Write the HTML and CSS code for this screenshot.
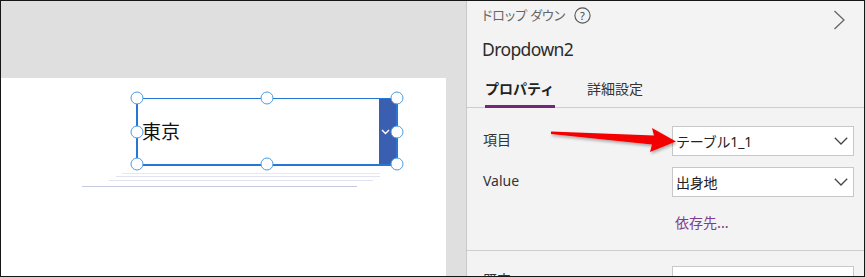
FILE: index.html
```html
<!DOCTYPE html>
<html lang="ja">
<head>
    <meta charset="UTF-8">
    <title>Dropdown2 - プロパティ</title>
    <link rel="stylesheet" href="styles.css">
</head>
<body>
    <div class="frame">
        <div class="stage">
            <div class="stage-top"></div>
            <div class="stage-body">
                <div class="canvas">
                    <div class="widget">
                        <span class="widget-text">東京</span>
                        <span class="widget-btn">
                            <svg width="9" height="6" viewBox="0 0 9 6"><path d="M1 1 L4.5 4.5 L8 1" fill="none" stroke="#fff" stroke-width="1.4"/></svg>
                        </span>
                        <span class="handle h-tl"></span>
                        <span class="handle h-tc"></span>
                        <span class="handle h-tr"></span>
                        <span class="handle h-ml"></span>
                        <span class="handle h-mr"></span>
                        <span class="handle h-bl"></span>
                        <span class="handle h-bc"></span>
                        <span class="handle h-br"></span>
                    </div>
                    <svg class="ghost-lines" width="300" height="20" viewBox="80 170 300 20">
                        <line x1="122" y1="173.5" x2="382" y2="173.5" stroke="#e5e7f1" stroke-width="1"/>
                        <line x1="116" y1="176.5" x2="382" y2="176.5" stroke="#e1e4ef" stroke-width="1"/>
                        <line x1="109" y1="180.5" x2="373" y2="180.5" stroke="#e1e4ef" stroke-width="1"/>
                        <line x1="82" y1="186.5" x2="357" y2="186.5" stroke="#c6cae0" stroke-width="1"/>
                    </svg>
                </div>
                <div class="canvas-gutter"></div>
            </div>
        </div>

        <aside class="panel">
            <div class="panel-top">
                <div class="kind">
                    <span>ドロップ ダウン</span>
                    <svg class="help" width="17" height="17" viewBox="0 0 17 17">
                        <circle cx="8.5" cy="8.5" r="7.6" fill="none" stroke="#555" stroke-width="1.1"/>
                        <text x="8.5" y="12.6" text-anchor="middle" font-size="11" font-family="Noto Sans, sans-serif" fill="#444">?</text>
                    </svg>
                </div>
                <svg class="collapse" width="13" height="20" viewBox="0 0 13 20"><path d="M1.5 1 L11 10 L1.5 19" fill="none" stroke="#666" stroke-width="1.3"/></svg>
            </div>
            <div class="ctrl-name">Dropdown2</div>
            <div class="tabs">
                <span class="tab active">プロパティ</span>
                <span class="tab">詳細設定</span>
            </div>

            <div class="props">
                <div class="prop-row">
                    <span class="prop-label">項目</span>
                    <div class="select">
                        <span>テーブル1_1</span>
                        <svg width="14" height="8" viewBox="0 0 14 8"><path d="M0.8 0.8 L7 7 L13.2 0.8" fill="none" stroke="#444" stroke-width="1.3"/></svg>
                    </div>
                </div>
                <div class="prop-row">
                    <span class="prop-label">Value</span>
                    <div class="select">
                        <span>出身地</span>
                        <svg width="14" height="8" viewBox="0 0 14 8"><path d="M0.8 0.8 L7 7 L13.2 0.8" fill="none" stroke="#444" stroke-width="1.3"/></svg>
                    </div>
                </div>
                <a href="#" class="dep-link">依存先...</a>
            </div>

            <div class="props props-next">
                <div class="prop-row">
                    <span class="prop-label">既定</span>
                    <div class="select">
                        <span>1</span>
                    </div>
                </div>
            </div>
        </aside>

        <svg class="pointer" width="145" height="40" viewBox="540 120 145 40">
            <defs>
                <filter id="arrow-shadow" x="-10%" y="-30%" width="120%" height="160%">
                    <feDropShadow dx="1" dy="2" stdDeviation="1.4" flood-color="#000" flood-opacity="0.3"/>
                </filter>
            </defs>
            <polygon points="551,131.5 654,135.5 652,128 676,141.5 650,152 652,144.5 551,134" fill="#f50000" filter="url(#arrow-shadow)"/>
        </svg>
    </div>
</body>
</html>
```

FILE: styles.css
```css
* {
    margin: 0;
    padding: 0;
    box-sizing: border-box;
}

body {
    font-family: "Noto Sans", "Noto Sans CJK JP", sans-serif;
    background: #fff;
}

.frame {
    position: relative;
    display: flex;
    width: 865px;
    height: 277px;
    border: 1px solid #161616;
    overflow: hidden;
}

/* left: the design canvas */
.stage {
    width: 465px;
    display: flex;
    flex-direction: column;
}

.stage-top {
    height: 77px;
    background: #dfdfdf;
}

.stage-body {
    flex: 1;
    display: flex;
}

.canvas {
    position: relative;
    width: 445px;
    background: #fff;
}

.canvas-gutter {
    flex: 1;
    background: #dfdfdf;
}

.widget {
    position: absolute;
    left: 135px;
    top: 20px;
    width: 262px;
    height: 68px;
    border: 2px solid #2577d3;
    border-top-width: 1.5px;
    display: flex;
    align-items: center;
}

.widget-text {
    flex: 1;
    padding-left: 4px;
    padding-bottom: 3px;
    font-family: "Noto Sans CJK JP", sans-serif;
    font-size: 19px;
    color: #111;
}

.widget-btn {
    align-self: stretch;
    width: 17px;
    background: #3a5fb1;
    display: flex;
    align-items: center;
    justify-content: center;
    padding-right: 4px;
}

.handle {
    position: absolute;
    width: 13px;
    height: 13px;
    border: 1.5px solid #4b9be3;
    border-radius: 50%;
    background: #fff;
    transform: translate(-50%, -50%);
}

.h-tl { left: -1px; top: -1px; }
.h-tc { left: 129px; top: -1px; }
.h-tr { left: 259px; top: -1px; }
.h-ml { left: -1px; top: 33px; }
.h-mr { left: 259px; top: 33px; }
.h-bl { left: -1px; top: 65px; }
.h-bc { left: 129px; top: 65px; }
.h-br { left: 259px; top: 65px; }

.ghost-lines {
    position: absolute;
    left: 79px;
    top: 92px;
}

/* right: properties pane */
.panel {
    flex: 1;
    background: #f3f3f3;
    border-left: 1px solid #c9c9c9;
    color: #333;
}

.panel-top {
    display: flex;
    justify-content: space-between;
    align-items: flex-start;
    height: 30px;
    padding-left: 15px;
}

.kind {
    display: flex;
    align-items: center;
    gap: 9px;
    margin-top: 5px;
    font-family: "Noto Sans CJK JP", sans-serif;
    font-size: 13px;
    line-height: 18px;
    color: #666;
    font-feature-settings: "palt";
}

.help {
    margin-top: 1px;
}

.collapse {
    margin-top: 9px;
    margin-right: 18px;
}

.ctrl-name {
    margin-top: 6px;
    padding-left: 15px;
    font-size: 17.5px;
    line-height: 24px;
    letter-spacing: -0.6px;
    color: #2b2b2b;
}

.tabs {
    display: flex;
    gap: 32px;
    margin-top: 17px;
    padding-left: 18px;
    border-bottom: 1px solid #cdcdcd;
}

.tab {
    font-family: "Noto Sans CJK JP", sans-serif;
    font-size: 14px;
    line-height: 20px;
    padding-bottom: 7px;
    border-bottom: 3px solid transparent;
    margin-bottom: -1px;
    color: #333;
}

.tab.active {
    width: 70px;
    font-weight: 700;
    color: #222;
    border-bottom-color: #742774;
}

.props {
    display: flex;
    flex-direction: column;
    gap: 11px;
    padding: 18px 10px 18px 16px;
    border-bottom: 1px solid #cdcdcd;
}

.props-next {
    padding-top: 15px;
    border-bottom: none;
}

.prop-row {
    display: flex;
    align-items: center;
    justify-content: space-between;
}

.prop-label {
    font-size: 14px;
    line-height: 20px;
    padding-bottom: 2px;
    color: #333;
}

.select {
    width: 182px;
    height: 30px;
    background: #fff;
    border: 1px solid #c8c8c8;
    display: flex;
    align-items: center;
    justify-content: space-between;
    padding: 0 5px 0 3px;
    font-size: 14px;
    letter-spacing: -0.2px;
    color: #222;
}

.dep-link {
    margin-top: 4px;
    margin-left: 192px;
    font-family: "Noto Sans CJK JP", sans-serif;
    font-size: 14px;
    line-height: 20px;
    color: #7d3c91;
    text-decoration: none;
}

.pointer {
    position: absolute;
    left: 539px;
    top: 119px;
}
```
